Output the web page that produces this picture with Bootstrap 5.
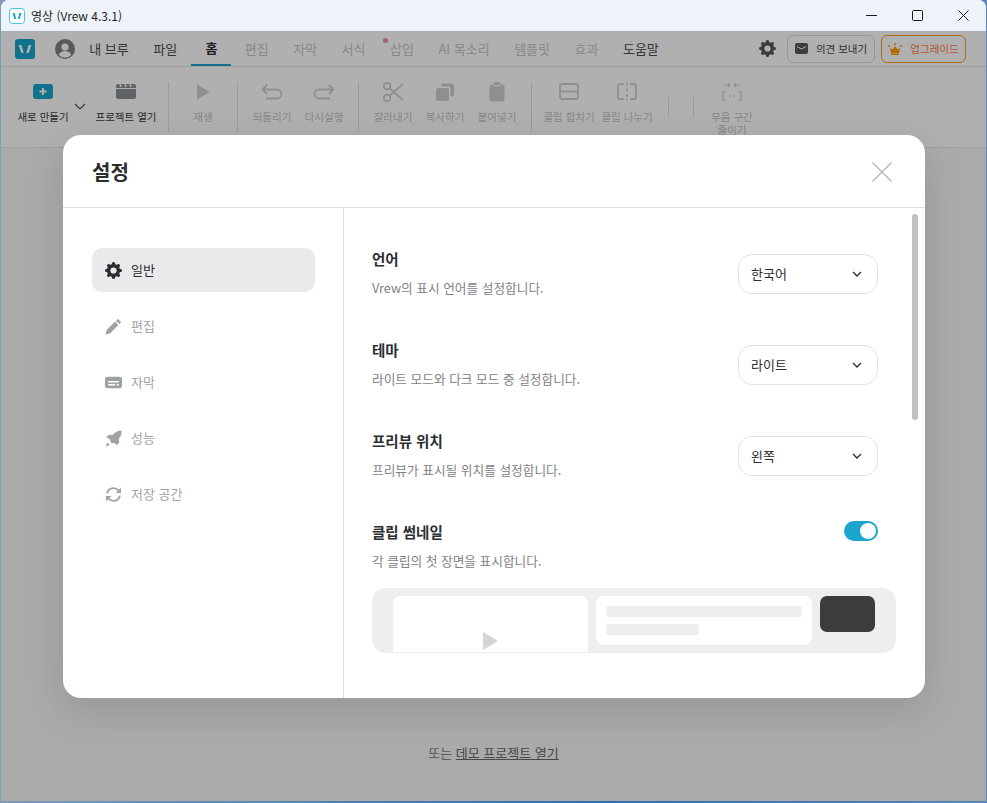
<!DOCTYPE html>
<html lang="ko">
<head>
    <meta charset="UTF-8">
    <meta name="viewport" content="width=device-width, initial-scale=1.0">
    <title>Vrew 설정</title>
    <link href="https://cdn.jsdelivr.net/npm/bootstrap@5.3.0/dist/css/bootstrap.min.css" rel="stylesheet">
    <style>
        html, body { height: 100%; }
        body {
            margin: 0;
            overflow: hidden;
            background: linear-gradient(90deg, #7f9bb5, #2f6fb5 60%, #5a86b8);
            font-family: "Noto Sans CJK KR", "Noto Sans", sans-serif;
            color: #2b2d30;
        }
        .app-window {
            height: 801px;
            margin: 0 1px;
            background: #f5f6f5;
            border-radius: 8px 8px 0 0;
            overflow: hidden;
            position: relative;
        }
        .title-bar { height: 31px; background: #eef3fa; font-size: 12px; color: #1f1f1f; padding-left: 8px; }
        .title-logo { width: 16px; height: 16px; margin-right: 6px; }
        .win-btn { width: 46px; height: 31px; }
        .menu-bar { height: 36px; background: #fff; border-bottom: 1px solid #e6e6e6; padding-left: 14px; font-size: 13px; }
        .app-logo { width: 20px; height: 20px; border-radius: 3px; background: #19a5cd; margin-right: 20px; }
        .avatar { width: 20px; height: 20px; margin-right: 2px; }
        .menu-link { padding: 0 12.25px; height: 35px; color: #c4c6c8; position: relative; white-space: nowrap; }
        .menu-link.is-on { color: #4a4d50; }
        .menu-link.is-current { min-width: 40px; padding: 0; font-weight: 700; color: #2b2d30; border-bottom: 2px solid #19a5cd; margin: 0 1px 0 2px; }
        .new-dot { position: absolute; width: 5px; height: 5px; border-radius: 50%; background: #f98d88; left: 5px; top: 7px; }
        .gear-top { width: 17px; height: 17px; fill: #55595c; margin-right: 11px; }
        .top-btn { height: 28px; font-size: 10.5px; border-radius: 6px; background: transparent; padding: 0; }
        .top-btn-plain { width: 88px; border: 1px solid #dcdcdc; color: #45484b; margin-right: 6px; }
        .top-btn-up { width: 85px; border: 1px solid #ff9a17; color: #ff7f45; margin-right: 20px; }
        .tool-bar { height: 81px; background: #fff; border-bottom: 1px solid #e6e6e6; padding: 15px 0 0 16px; }
        .tool-item { width: 52px; color: #c4c6c8; font-size: 10.5px; line-height: 13px; text-align: center; white-space: nowrap; }
        .tool-item.is-on { color: #3a3d40; }
        .tool-item.is-wide { width: 68px; }
        .tool-item.is-clip { width: 58px; }
        .tool-item.is-last { margin-left: 12px; }
        .tool-icon { height: 20px; margin-bottom: 8px; }
        .tool-sep { width: 1px; height: 50px; background: #e3e3e3; margin: 0 8px; }
        .tool-sep-short { width: 1px; height: 20px; background: #e3e3e3; margin-top: 15px; }
        .tool-sep-short.is-first { margin-left: 12px; margin-right: 24px; }
        .tool-more { width: 23px; padding: 10px 2px 0 0; }
        .home-pane { height: 654px; padding-top: 595px; font-size: 13px; color: #7f8285; }
        .home-pane u { color: #66696c; }
        .dim-layer { position: absolute; inset: 31px 0 0 0; background: rgba(0, 0, 0, .31); }
        .settings-wrap { position: absolute; left: 62px; top: 135px; width: 862px; }
        .settings-box { height: 563px; background: #fff; border: 0; border-radius: 18px; box-shadow: 0 12px 40px rgba(0, 0, 0, .12); overflow: hidden; color: #2b2d30; }
        .settings-head { height: 73px; border-bottom: 1px solid #dedede; padding: 2px 33px 0 29px; }
        .settings-head h5 { font-size: 20px; font-weight: 700; margin: 0; }
        .side-nav { width: 281px; border-right: 1px solid #dedede; padding: 40px 28px 0 29px; flex: none; }
        .side-link { height: 44px; margin-bottom: 12px; padding-left: 13px; gap: 9px; font-size: 13px; color: #a0a3a6; border-radius: 10px; }
        .side-link.is-current { background: #e9eaec; color: #2b2d30; }
        .side-icon { width: 17px; height: 17px; fill: currentColor; flex: none; }
        .settings-pane { padding: 38px 47px 0 28px; position: relative; flex: 1; min-width: 0; }
        .pane-row { height: 91px; }
        .pane-title { font-size: 14.5px; font-weight: 700; line-height: 26px; }
        .pane-desc { font-size: 12.7px; color: #7f8285; line-height: 20px; margin-top: 6px; }
        .pick-box { width: 140px; height: 40px; margin-top: 8px; border: 1px solid #e2e2e2; border-radius: 14px; padding: 0 15px 0 12px; font-size: 13px; }
        .thumb-toggle { width: 34px; height: 20px; margin-top: 2px; border-radius: 10px; background: #19a5cd; padding-right: 2px; }
        .thumb-toggle span { width: 16px; height: 16px; border-radius: 50%; background: #fff; }
        .thumb-preview { height: 65px; width: 524px; margin-top: 17px; background: #eee; border-radius: 14px; padding: 8px 21px 0; gap: 8px; }
        .preview-video { width: 195px; height: 56px; background: #fff; border-radius: 7px 7px 0 0; padding-top: 36px; }
        .preview-text { width: 216px; height: 49px; background: #fff; border-radius: 8px; padding: 10px; }
        .preview-line { height: 11px; background: #eee; border-radius: 3px; margin-bottom: 7px; }
        .preview-line-short { width: 93px; }
        .preview-face { width: 55px; height: 36px; background: #3c3c3c; border-radius: 7px; }
        .pane-scroll { position: absolute; right: 7px; top: 6px; width: 6px; height: 206px; border-radius: 3px; background: #bfc3c7; }
    </style>
</head>
<body>
    <svg width="0" height="0" class="d-block">
        <symbol id="i-gear" viewBox="0 0 16 16"><path d="M9.405 1.05c-.413-1.4-2.397-1.4-2.81 0l-.1.34a1.464 1.464 0 0 1-2.105.872l-.31-.17c-1.283-.698-2.686.705-1.987 1.987l.169.311c.446.82.023 1.841-.872 2.105l-.34.1c-1.4.413-1.4 2.397 0 2.81l.34.1a1.464 1.464 0 0 1 .872 2.105l-.17.31c-.698 1.283.705 2.686 1.987 1.987l.311-.169a1.464 1.464 0 0 1 2.105.872l.1.34c.413 1.4 2.397 1.4 2.81 0l.1-.34a1.464 1.464 0 0 1 2.105-.872l.31.17c1.283.698 2.686-.705 1.987-1.987l-.169-.311a1.464 1.464 0 0 1 .872-2.105l.34-.1c1.4-.413 1.4-2.397 0-2.81l-.34-.1a1.464 1.464 0 0 1-.872-2.105l.17-.31c.698-1.283-.705-2.686-1.987-1.987l-.311.169a1.464 1.464 0 0 1-2.105-.872l-.1-.34zM8 10.93a2.929 2.929 0 1 1 0-5.86 2.929 2.929 0 0 1 0 5.858z"/></symbol>
    </svg>

    <div class="app-window">
        <div class="title-bar d-flex align-items-center">
            <svg class="title-logo" viewBox="0 0 16 16"><rect x=".5" y=".5" width="15" height="15" rx="3" fill="#fff" stroke="#4cc4e0"/><path d="M3.500 5h2.200l1.500 6H5.400zM12.500 5h-2.200l-1.500 6h1.800z" fill="#19a5cd"/></svg>
            <span>영상 (Vrew 4.3.1)</span>
            <div class="ms-auto d-flex">
                <div class="win-btn d-flex align-items-center justify-content-center"><svg width="11" height="11"><path d="M0 5.500h11" stroke="#1a1a1a"/></svg></div>
                <div class="win-btn d-flex align-items-center justify-content-center"><svg width="11" height="11"><rect x=".5" y=".5" width="10" height="10" rx="1" fill="none" stroke="#1a1a1a"/></svg></div>
                <div class="win-btn d-flex align-items-center justify-content-center"><svg width="11" height="11"><path d="M.5.5l10 10M10.500.5l-10 10" stroke="#1a1a1a"/></svg></div>
            </div>
        </div>

        <div class="menu-bar d-flex align-items-center">
            <div class="app-logo d-flex align-items-center justify-content-center">
                <svg width="14" height="10" viewBox="0 0 14 10"><path d="M.5 1h3l2.200 8H3.300zM13.500 1h-3L8.300 9h2.400z" fill="#fff"/></svg>
            </div>
            <svg class="avatar" viewBox="0 0 20 20"><circle cx="10" cy="10" r="10" fill="#7f8285"/><circle cx="10" cy="8" r="3.600" fill="#fff"/><path d="M3.800 16c1-3 3.400-4 6.200-4s5.200 1 6.200 4a8.500 8.500 0 0 1-12.400 0z" fill="#fff"/></svg>
            <div class="menu-link is-on d-flex align-items-center">내 브루</div>
            <div class="menu-link is-on d-flex align-items-center">파일</div>
            <div class="menu-link is-current d-flex align-items-center justify-content-center">홈</div>
            <div class="menu-link d-flex align-items-center">편집</div>
            <div class="menu-link d-flex align-items-center">자막</div>
            <div class="menu-link d-flex align-items-center">서식</div>
            <div class="menu-link d-flex align-items-center"><i class="new-dot"></i>삽입</div>
            <div class="menu-link d-flex align-items-center">AI 목소리</div>
            <div class="menu-link d-flex align-items-center">템플릿</div>
            <div class="menu-link d-flex align-items-center">효과</div>
            <div class="menu-link is-on d-flex align-items-center">도움말</div>
            <svg class="gear-top ms-auto"><use href="#i-gear"/></svg>
            <button class="btn top-btn top-btn-plain d-flex align-items-center justify-content-center gap-2 text-nowrap">
                <svg width="13" height="11" viewBox="0 0 13 11"><rect width="13" height="11" rx="2" fill="#55595c"/><path d="M2 3.500l4.500 2.500L11 3.500" fill="none" stroke="#fff"/></svg>의견 보내기
            </button>
            <button class="btn top-btn top-btn-up d-flex align-items-center justify-content-center gap-2 text-nowrap">
                <svg width="14" height="12" viewBox="0 0 14 12"><circle cx="1" cy="3" r="1" fill="#ff9a00"/><circle cx="7" cy="1" r="1" fill="#ff9a00"/><circle cx="13" cy="3" r="1" fill="#ff9a00"/><path d="M2 5l2.500 1.500L7 3l2.500 3.500L12 5l-1 5H3z" fill="#ff9a00"/><rect x="3" y="10.500" width="8" height="1.500" fill="#ff9a00"/></svg>업그레이드
            </button>
        </div>

        <div class="tool-bar d-flex align-items-start">
            <div class="tool-item is-on">
                <div class="tool-icon"><svg width="20" height="20" viewBox="0 0 20 20"><rect y="2" width="20" height="15" rx="3" fill="#19a5cd"/><path d="M10 6v7M6.500 9.500h7" stroke="#fff" stroke-width="2"/></svg></div>
                새로 만들기
            </div>
            <div class="tool-more text-center"><svg width="12" height="7" viewBox="0 0 12 7"><path d="M1 1l5 5 5-5" fill="none" stroke="#555" stroke-width="1.200"/></svg></div>
            <div class="tool-item is-wide is-on">
                <div class="tool-icon"><svg width="20" height="20" viewBox="0 0 20 20"><path d="M0 7h20v8a2 2 0 0 1-2 2H2a2 2 0 0 1-2-2zM2 2h16a2 2 0 0 1 2 2v2H0V4a2 2 0 0 1 2-2z" fill="#8a8f94"/><path d="M4 2l1 3M9 2l1 3M14 2l1 3" stroke="#fff" stroke-width="1.500"/></svg></div>
                프로젝트 열기
            </div>
            <div class="tool-sep"></div>
            <div class="tool-item">
                <div class="tool-icon"><svg width="14" height="20" viewBox="0 0 14 20"><path d="M1 4a1 1 0 0 1 1.500-.8l10 6a1 1 0 0 1 0 1.600l-10 6A1 1 0 0 1 1 16z" fill="#cfd0d2"/></svg></div>
                재생
            </div>
            <div class="tool-sep"></div>
            <div class="tool-item">
                <div class="tool-icon"><svg width="22" height="20" viewBox="0 0 22 20"><path d="M6 3L1.500 7.500 6 12M2 7.500h14a4.500 4.500 0 0 1 0 9H5" fill="none" stroke="#cfd0d2" stroke-width="1.800"/></svg></div>
                되돌리기
            </div>
            <div class="tool-item">
                <div class="tool-icon"><svg width="22" height="20" viewBox="0 0 22 20"><path d="M16 3l4.500 4.500L16 12M20 7.500H6a4.500 4.500 0 0 0 0 9h11" fill="none" stroke="#cfd0d2" stroke-width="1.800"/></svg></div>
                다시실행
            </div>
            <div class="tool-sep"></div>
            <div class="tool-item">
                <div class="tool-icon"><svg width="22" height="20" viewBox="0 0 22 20"><g fill="none" stroke="#cfd0d2" stroke-width="1.800"><circle cx="5" cy="4" r="3.300"/><circle cx="5" cy="16" r="3.300"/><path d="M7.500 6.300L21 18M7.500 13.700L21 2"/></g></svg></div>
                잘라내기
            </div>
            <div class="tool-item">
                <div class="tool-icon"><svg width="18" height="20" viewBox="0 0 18 20"><rect x="0" y="6" width="13" height="13" rx="2.500" fill="#cfd0d2"/><path d="M5 4.500V3.500A2 2 0 0 1 7 1.500h9a2 2 0 0 1 2 2v9a2 2 0 0 1-2 2h-1.500V6.500a2 2 0 0 0-2-2z" fill="#cfd0d2"/></svg></div>
                복사하기
            </div>
            <div class="tool-item">
                <div class="tool-icon"><svg width="16" height="20" viewBox="0 0 16 20"><path d="M3 2.500h2a3 3 0 0 1 6 0h2a2.500 2.500 0 0 1 2.500 2.500v12a2.500 2.500 0 0 1-2.500 2.500H3A2.500 2.500 0 0 1 .5 17V5A2.500 2.500 0 0 1 3 2.500z" fill="#cfd0d2"/><rect x="4.500" y="3" width="7" height="1.200" rx=".5" fill="#fff"/></svg></div>
                붙여넣기
            </div>
            <div class="tool-sep"></div>
            <div class="tool-item is-clip">
                <div class="tool-icon"><svg width="20" height="20" viewBox="0 0 20 20"><rect x="1" y="2" width="18" height="15" rx="2.500" fill="none" stroke="#cfd0d2" stroke-width="1.800"/><path d="M1 9.500h18" stroke="#cfd0d2" stroke-width="1.800"/></svg></div>
                클립 합치기
            </div>
            <div class="tool-item is-clip">
                <div class="tool-icon"><svg width="20" height="20" viewBox="0 0 20 20"><path d="M7 2H3a2 2 0 0 0-2 2v11a2 2 0 0 0 2 2h4M13 2h4a2 2 0 0 1 2 2v11a2 2 0 0 1-2 2h-4" fill="none" stroke="#cfd0d2" stroke-width="1.800"/><path d="M10 1v3M10 6.500v3M10 12v3M10 16.500v2" stroke="#cfd0d2" stroke-width="1.500"/></svg></div>
                클립 나누기
            </div>
            <div class="tool-sep-short is-first"></div>
            <div class="tool-sep-short"></div>
            <div class="tool-item is-last">
                <div class="tool-icon"><svg width="20" height="20" viewBox="0 0 20 20"><g fill="none" stroke="#cfd0d2" stroke-width="1.200"><path d="M2 3h6M6 1l2 2-2 2M18 3h-6M14 1l-2 2 2 2M4 10H1v8h3M16 10h3v8h-3"/></g><path d="M7 14h1.500M11.500 14H13" stroke="#cfd0d2" stroke-width="1.500"/></svg></div>
                무음 구간<br>줄이기
            </div>
        </div>

        <div class="home-pane text-center">또는 <u>데모 프로젝트 열기</u></div>

        <div class="dim-layer"></div>

        <div class="settings-wrap">
            <div class="modal-content settings-box">
                <div class="settings-head d-flex align-items-center justify-content-between">
                    <h5>설정</h5>
                    <svg width="20" height="20" viewBox="0 0 20 20"><path d="M.5.5l19 19M19.500.5l-19 19" stroke="#b5b5b5" stroke-width="1.300"/></svg>
                </div>
                <div class="d-flex flex-grow-1">
                    <div class="side-nav">
                        <div class="side-link is-current d-flex align-items-center">
                            <svg class="side-icon"><use href="#i-gear"/></svg>일반
                        </div>
                        <div class="side-link d-flex align-items-center">
                            <svg class="side-icon" viewBox="0 0 16 16"><path d="M12.100.8l3.100 3.100-1.700 1.700-3.100-3.100zM9.500 3.400l3.100 3.100-8 8L.5 15.500l1-4.100z"/></svg>편집
                        </div>
                        <div class="side-link d-flex align-items-center">
                            <svg class="side-icon" viewBox="0 0 16 16"><path fill-rule="evenodd" d="M2 2.500h12a2 2 0 0 1 2 2v7a2 2 0 0 1-2 2H2a2 2 0 0 1-2-2v-7a2 2 0 0 1 2-2zM3 6.500v1.500h10V6.500zM3 9.300v1.500h6.500V9.300zM11 9.300v1.500h2V9.300z"/></svg>자막
                        </div>
                        <div class="side-link d-flex align-items-center">
                            <svg class="side-icon" viewBox="0 0 16 16"><path d="M15.500.5c.3 3.500-.6 5.800-2.500 7.700l.3 3.800-2.300 2.300-1.500-1.800-4-.5-1-3.500-3.200-1.500L3.500 4.500l3.800.3C9.500 2 12 .5 15.500.5zM1 15.500l.8-3.800 3 2.200z"/></svg>성능
                        </div>
                        <div class="side-link d-flex align-items-center">
                            <svg class="side-icon" viewBox="0 0 16 16"><path d="M2 7a6 6 0 0 1 10.500-2.800" fill="none" stroke="currentColor" stroke-width="1.800"/><path d="M15 1.500v5h-5z"/><path d="M14 9a6 6 0 0 1-10.500 2.800" fill="none" stroke="currentColor" stroke-width="1.800"/><path d="M1 14.500v-5h5z"/></svg>저장 공간
                        </div>
                    </div>
                    <div class="settings-pane">
                        <div class="pane-row d-flex justify-content-between">
                            <div>
                                <div class="pane-title">언어</div>
                                <div class="pane-desc">Vrew의 표시 언어를 설정합니다.</div>
                            </div>
                            <div class="pick-box d-flex align-items-center justify-content-between">한국어<svg width="10" height="6" viewBox="0 0 10 6"><path d="M1 1l4 4 4-4" fill="none" stroke="#2b2d30" stroke-width="1.300"/></svg></div>
                        </div>
                        <div class="pane-row d-flex justify-content-between">
                            <div>
                                <div class="pane-title">테마</div>
                                <div class="pane-desc">라이트 모드와 다크 모드 중 설정합니다.</div>
                            </div>
                            <div class="pick-box d-flex align-items-center justify-content-between">라이트<svg width="10" height="6" viewBox="0 0 10 6"><path d="M1 1l4 4 4-4" fill="none" stroke="#2b2d30" stroke-width="1.300"/></svg></div>
                        </div>
                        <div class="pane-row d-flex justify-content-between">
                            <div>
                                <div class="pane-title">프리뷰 위치</div>
                                <div class="pane-desc">프리뷰가 표시될 위치를 설정합니다.</div>
                            </div>
                            <div class="pick-box d-flex align-items-center justify-content-between">왼쪽<svg width="10" height="6" viewBox="0 0 10 6"><path d="M1 1l4 4 4-4" fill="none" stroke="#2b2d30" stroke-width="1.300"/></svg></div>
                        </div>
                        <div class="d-flex justify-content-between">
                            <div>
                                <div class="pane-title">클립 썸네일</div>
                                <div class="pane-desc">각 클립의 첫 장면을 표시합니다.</div>
                            </div>
                            <div class="thumb-toggle d-flex align-items-center justify-content-end"><span></span></div>
                        </div>
                        <div class="thumb-preview d-flex align-items-start">
                            <div class="preview-video text-center"><svg class="d-block mx-auto" width="16" height="18" viewBox="0 0 16 18"><path d="M0 0l15 9-15 9z" fill="#d5d5d5"/></svg></div>
                            <div class="preview-text">
                                <div class="preview-line"></div>
                                <div class="preview-line preview-line-short"></div>
                            </div>
                            <div class="preview-face"></div>
                        </div>
                        <div class="pane-scroll"></div>
                    </div>
                </div>
            </div>
        </div>
    </div>

    <script src="https://cdn.jsdelivr.net/npm/bootstrap@5.3.0/dist/js/bootstrap.bundle.min.js"></script>
</body>
</html>
